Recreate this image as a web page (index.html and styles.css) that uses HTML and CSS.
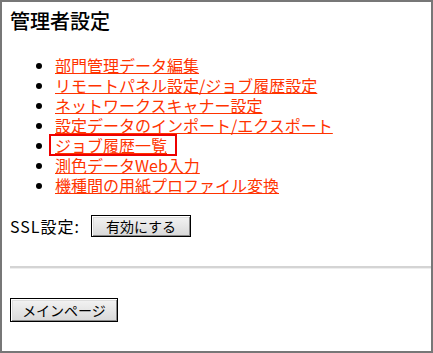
FILE: index.html
```html
<!DOCTYPE html>
<html>
<head>
<meta charset="utf-8">
<title>管理者設定</title>
<link rel="stylesheet" href="styles.css">
</head>
<body>
<div class="frame">
	<h1>管理者設定</h1>
	<ul class="menu">
		<li><a href="#">部門管理データ編集</a></li>
		<li><a href="#">リモートパネル設定/ジョブ履歴設定</a></li>
		<li><a href="#">ネットワークスキャナー設定</a></li>
		<li><a href="#">設定データのインポート/エクスポート</a></li>
		<li><span class="mark"><a href="#">ジョブ履歴一覧</a></span></li>
		<li><a href="#">測色データWeb入力</a></li>
		<li><a href="#">機種間の用紙プロファイル変換</a></li>
	</ul>
	<div class="ssl">
		<span class="label">SSL設定:</span>
		<button class="btn btn-ssl">有効にする</button>
	</div>
	<hr>
	<button class="btn btn-main">メインページ</button>
</div>
</body>
</html>
```
FILE: styles.css
```css
body{
	margin: 0;
	font-family: "Noto Sans CJK JP", "Noto Sans", sans-serif;
	font-size: 16px;
	color: #000;
	background: #fff;
}
.frame{
	width: 433px;
	height: 353px;
	box-sizing: border-box;
	border: 2px solid #777;
	padding: 0 0 0 8px;
	overflow: hidden;
}
h1{
	font-size: 20px;
	font-weight: 500;
	line-height: 24px;
	margin: 7px 0 22px;
}
.menu{
	margin: 0;
	padding: 0 0 0 45px;
	line-height: 20px;
}
.menu li::marker{
	color: #000;
}
.menu a{
	color: #ff3300;
	text-decoration: underline;
}
.menu .mark{
	display: inline-block;
	vertical-align: top;
	height: 18px;
	line-height: 18px;
	margin: -1px 0 -1px -6px;
	padding: 0 8px 0 4px;
	border: 2px solid #ee0000;
}
.ssl{
	display: flex;
	align-items: center;
	gap: 7px;
	height: 22px;
	margin-top: 20px;
}
.ssl .label{
	width: 74px;
	letter-spacing: 1px;
}
.btn{
	font-family: "Noto Sans CJK JP", "Noto Sans", sans-serif;
	font-size: 14px;
	line-height: 16px;
	color: #000;
	padding: 0;
	border: 1px solid #000;
	box-shadow: inset 1px 1px 0 #fff, inset -1px -1px 0 #888, inset 2px 2px 0 #ddd;
	background: linear-gradient(#f4f4f4, #d8d8d8);
}
.btn-ssl{
	width: 100px;
	height: 22px;
}
hr{
	border: 0;
	height: 2px;
	background: #d4d4d4;
	border-bottom: 1px solid #eee;
	margin: 29px 0 28px;
}
.btn-main{
	width: 108px;
	height: 24px;
}
```
